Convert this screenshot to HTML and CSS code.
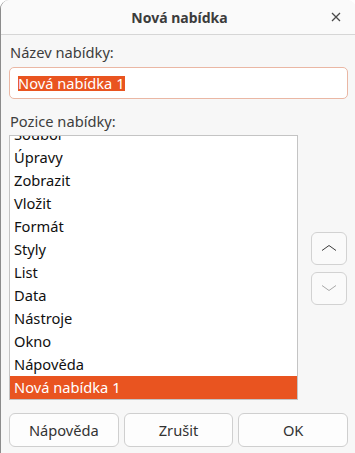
FILE: index.html
```html
<!DOCTYPE html>
<html>
<head>
<meta charset="utf-8">
<title>Nová nabídka</title>
<link rel="stylesheet" href="styles.css">
</head>
<body>
<div class="window">
  <header class="titlebar">
    <span class="title">Nová nabídka</span>
    <button class="close" aria-label="Zavřít">
      <svg width="10" height="10" viewBox="0 0 10 10"><path d="M1 1L9 9M9 1L1 9" stroke="#4a4a4a" stroke-width="1.3" fill="none"/></svg>
    </button>
  </header>
  <main class="content">
    <div class="label">Název nabídky:</div>
    <div class="entry"><span class="selected-text">Nová nabídka 1</span></div>

    <div class="label label-gap">Pozice nabídky:</div>
    <div class="position">
      <div class="listbox">
        <ul class="items">
          <li class="first">Soubor</li>
          <li>Úpravy</li>
          <li>Zobrazit</li>
          <li>Vložit</li>
          <li>Formát</li>
          <li>Styly</li>
          <li>List</li>
          <li>Data</li>
          <li>Nástroje</li>
          <li>Okno</li>
          <li>Nápověda</li>
          <li class="active">Nová nabídka 1</li>
        </ul>
      </div>
      <div class="movers">
        <button class="mover">
          <svg width="16" height="8" viewBox="0 0 16 8"><path d="M1 6.5L8 1.5L15 6.5" stroke="#3c3c3c" stroke-width="1" fill="none"/></svg>
        </button>
        <button class="mover">
          <svg width="16" height="8" viewBox="0 0 16 8"><path d="M1 1.5L8 6.5L15 1.5" stroke="#a8a8a8" stroke-width="1" fill="none"/></svg>
        </button>
      </div>
    </div>

    <div class="actions">
      <button class="btn">Nápověda</button>
      <button class="btn">Zrušit</button>
      <button class="btn">OK</button>
    </div>
  </main>
</div>
</body>
</html>
```

FILE: styles.css
```css
html, body {
  margin: 0;
  padding: 0;
  background: #ffffff;
}
body {
  font-family: 'Noto Sans', 'Open Sans', sans-serif;
  font-size: 14.67px;
  color: #3d3d3d;
}
button {
  font-family: inherit;
  font-size: inherit;
  color: inherit;
  cursor: pointer;
}
.window {
  width: 356px;
  height: 453px;
  box-sizing: border-box;
  background: #f7f7f7;
  border-left: 1px solid #8c8c8c;
  border-radius: 9px 9px 0 0;
  overflow: hidden;
}
.titlebar {
  height: 34px;
  border-bottom: 1px solid #d6d6d6;
  display: flex;
  align-items: center;
  justify-content: center;
  position: relative;
  background: #fafafa;
}
.title {
  font-weight: bold;
  font-size: 14px;
  color: #3c3c3c;
  margin-left: 2px;
}
.close {
  position: absolute;
  right: 13px;
  top: 10px;
  width: 14px;
  height: 14px;
  border: 0;
  padding: 0;
  background: none;
  display: flex;
  align-items: center;
  justify-content: center;
}
.content {
  padding: 8px 8px 0 8px;
}
.label {
  line-height: 18px;
  height: 18px;
  padding-left: 1px;
}
.label-gap {
  margin-top: 13px;
}
.entry {
  margin-top: 6px;
  height: 32px;
  box-sizing: border-box;
  border: 1px solid #eab7a4;
  border-radius: 5px;
  background: #ffffff;
  display: flex;
  align-items: center;
  padding-left: 8px;
}
.selected-text {
  background: #e95420;
  color: #ffffff;
  line-height: 15px;
}
.position {
  margin-top: 5px;
  display: flex;
  align-items: center;
  gap: 13px;
}
.listbox {
  width: 289px;
  height: 265px;
  box-sizing: border-box;
  border: 1px solid #c4c4c4;
  background: #ffffff;
  overflow: hidden;
}
.items {
  list-style: none;
  margin: 0;
  padding: 0;
}
.items li {
  height: 23px;
  line-height: 23px;
  padding-left: 4px;
  color: #101010;
}
.items li.first {
  margin-top: -13px;
}
.items li.active {
  background: #e95420;
  color: #ffffff;
}
.movers {
  display: flex;
  flex-direction: column;
  gap: 7px;
  margin-top: 1px;
}
.mover {
  width: 36px;
  height: 33px;
  box-sizing: border-box;
  border: 1px solid #d2d2d2;
  border-radius: 6px;
  background: #fafafa;
  padding: 0;
  display: flex;
  align-items: center;
  justify-content: center;
}
.actions {
  margin-top: 13px;
  display: flex;
  gap: 5px;
}
.btn {
  flex: 1;
  height: 34px;
  box-sizing: border-box;
  border: 1px solid #cfcfcf;
  border-radius: 6px;
  background: #fdfdfd;
  color: #333333;
  padding: 0;
}
```
